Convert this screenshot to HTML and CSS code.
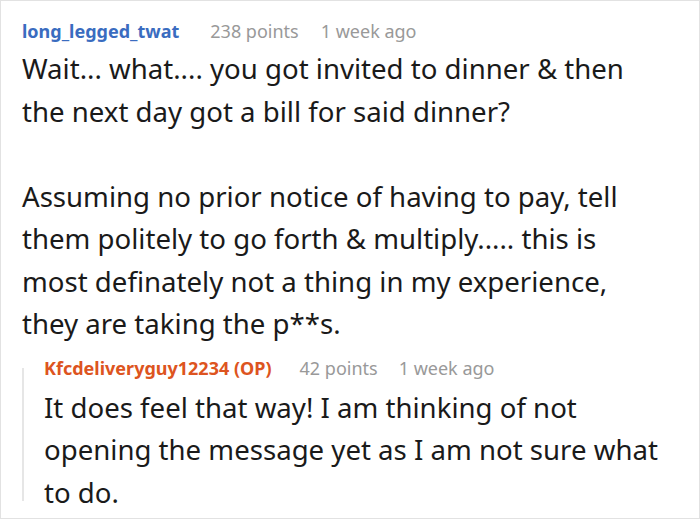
FILE: index.html
```html
<!DOCTYPE html>
<html>
<head>
<meta charset="utf-8">
<link rel="stylesheet" href="styles.css">
</head>
<body>
<div class="frame">
  <div class="comment">
    <div class="meta">
      <span class="user">long_legged_twat</span>
      <span class="info">238 points</span>
      <span class="info">1 week ago</span>
    </div>
    <div class="text">
      <p>Wait... what.... you got invited to dinner &amp; then the next day got a bill for said dinner?</p>
      <p>Assuming no prior notice of having to pay, tell them politely to go forth &amp; multiply..... this is most definately not a thing in my experience, they are taking the p**s.</p>
    </div>
  </div>
  <div class="reply">
    <div class="meta">
      <span class="user op">Kfcdeliveryguy12234 (OP)</span>
      <span class="info">42 points</span>
      <span class="info">1 week ago</span>
    </div>
    <div class="text">
      <p>It does feel that way! I am thinking of not opening the message yet as I am not sure what to do.</p>
    </div>
  </div>
</div>
</body>
</html>
```

FILE: styles.css
```css
html, body {
  margin: 0;
  padding: 0;
  background: #ffffff;
}
body {
  font-family: "Noto Sans", "DejaVu Sans", sans-serif;
  color: #1a1a1a;
}
.frame {
  width: 700px;
  height: 519px;
  box-sizing: border-box;
  border: 1px solid #e2e2e2;
  padding: 14px 31px 0 21px;
  overflow: hidden;
}
.meta {
  display: flex;
  align-items: baseline;
  gap: 22px;
  font-size: 18px;
  line-height: 32px;
}
.user {
  font-weight: 700;
  color: #3a6cc0;
  margin-right: 9px;
}
.user.op {
  color: #dd5420;
  margin-right: 7px;
}
.reply .meta {
  gap: 21px;
}
.info {
  color: #999999;
}
.text {
  font-size: 27.6px;
  line-height: 42.5px;
  color: #1a1a1a;
}
.text p {
  margin: 0 0 42.5px 0;
}
.text p:last-child {
  margin-bottom: 0;
}
.reply {
  display: flex;
  flex-direction: column;
  margin-top: 23px;
  border-left: 2px solid #e6e6e6;
  padding-left: 20px;
}
.reply .meta {
  line-height: 36px;
  margin-top: -18px;
}
.reply .text {
  margin-bottom: -12px;
}
```
